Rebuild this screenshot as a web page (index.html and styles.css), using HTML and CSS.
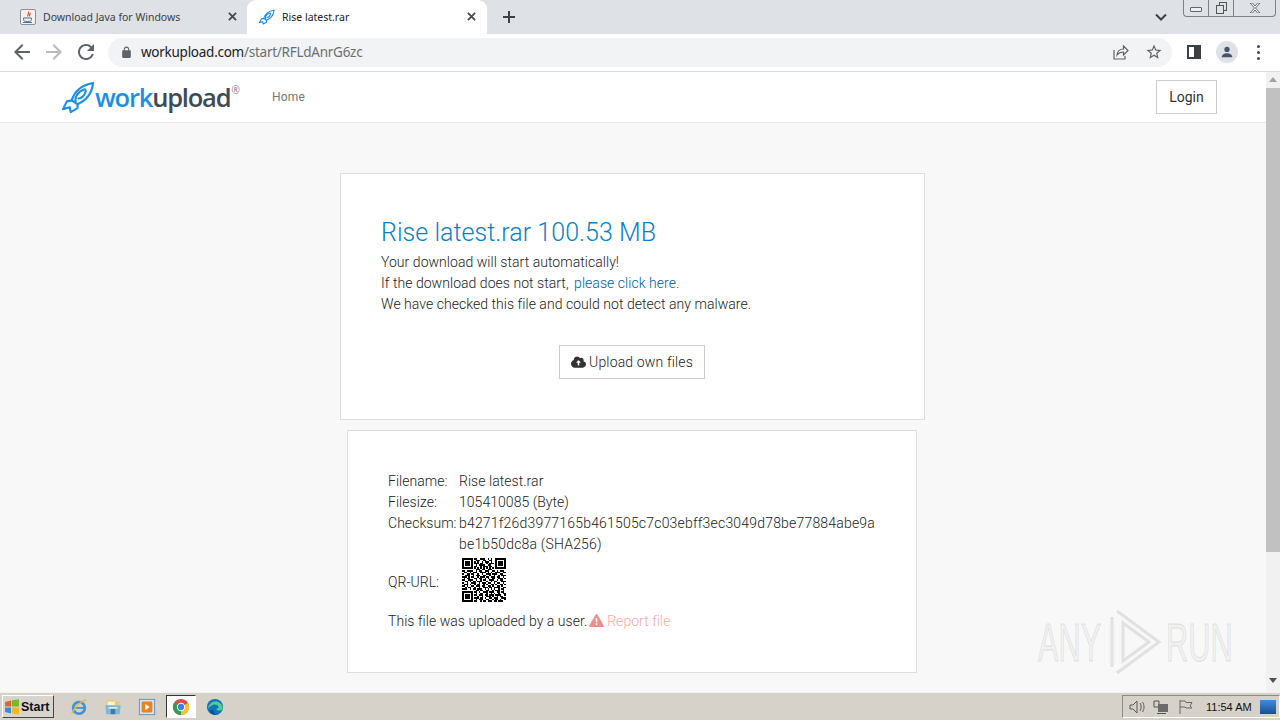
FILE: index.html

```html
<!DOCTYPE html>
<html lang="en">
<head>
  <meta charset="UTF-8">
  <title>Rise latest.rar</title>
  <link rel="stylesheet" href="styles.css">
</head>
<body>
  <!-- browser tabs -->
  <div class="tabstrip">
    <div class="tab">
      <svg class="favicon" viewBox="0 0 16 16"><rect x="0.5" y="0.5" width="15" height="15" rx="1.5" fill="#f4f1ec" stroke="#8b8f96"/><path d="M8.5 2.5c1.500 2-2 3-.5 5M10 4c.8 1.400-1.400 2-.3 3.400" fill="none" stroke="#d9531e" stroke-width="1.200"/><path d="M3.500 9h8v1.500c0 1.500-1.500 2-4 2s-4-.5-4-2zM3 13.500h9" fill="none" stroke="#4a6f9c" stroke-width="1"/></svg>
      <span class="tab-title">Download Java for Windows</span>
      <svg class="tab-close" viewBox="0 0 10 10"><path d="M1 1l8 8M9 1l-8 8"/></svg>
    </div>
    <div class="tab active">
      <svg class="favicon" viewBox="0 0 34 34"><path d="M10 20C13 10 21 4 32 2c-1 11-7 18-16 22zM10 20l-5 1-4 8 7-2 1 5 7-4 0-4M14 21c-1-5 3-10 8-12 2-1 3 1 2 3-1 3-4 6-7 6" fill="none" stroke="#1b8fe6" stroke-width="2.400" stroke-linejoin="round" stroke-linecap="round"/></svg>
      <span class="tab-title">Rise latest.rar</span>
      <svg class="tab-close" viewBox="0 0 10 10"><path d="M1 1l8 8M9 1l-8 8"/></svg>
    </div>
    <svg class="new-tab" viewBox="0 0 12 12"><path d="M6 0v12M0 6h12"/></svg>
    <svg class="tab-search" viewBox="0 0 12 8"><path d="M1 1.500l5 5 5-5"/></svg>
    <div class="win-controls">
      <div class="win-btn win-min"><span></span></div>
      <div class="win-btn win-max"><span></span><span></span></div>
      <div class="win-btn win-close">
        <svg viewBox="0 0 12 10"><path d="M1 0l4.500 5-4.500 5h2.500l2.500-3 2.500 3h2.500l-4.500-5 4.500-5h-2.500l-2.500 3-2.500-3z"/></svg>
      </div>
    </div>
  </div>

  <!-- browser toolbar -->
  <div class="toolbar">
    <svg class="tool-icon" viewBox="0 0 24 24"><path d="M20 11H7.830l5.590-5.590L12 4l-8 8 8 8 1.410-1.410L7.830 13H20v-2z"/></svg>
    <svg class="tool-icon faded" viewBox="0 0 24 24"><path d="M12 4l-1.410 1.410L16.170 11H4v2h12.170l-5.580 5.590L12 20l8-8z"/></svg>
    <svg class="tool-icon" viewBox="0 0 24 24"><path d="M17.650 6.350A7.958 7.958 0 0 0 12 4c-4.420 0-7.990 3.580-7.990 8s3.570 8 7.990 8c3.730 0 6.840-2.550 7.730-6h-2.080A5.990 5.990 0 0 1 12 18c-3.310 0-6-2.690-6-6s2.690-6 6-6c1.660 0 3.140.690 4.220 1.780L13 11h7V4l-2.350 2.350z"/></svg>
    <div class="omnibox">
      <svg class="lock" viewBox="0 0 24 24"><path d="M18 8h-1V6c0-2.760-2.240-5-5-5S7 3.240 7 6v2H6c-1.100 0-2 .9-2 2v10c0 1.100.9 2 2 2h12c1.100 0 2-.9 2-2V10c0-1.100-.9-2-2-2zM9 6c0-1.660 1.340-3 3-3s3 1.340 3 3v2H9V6z"/></svg>
      <span class="url"><span class="url-host">workupload.com</span>/start/RFLdAnrG6zc</span>
      <svg class="omni-icon share" viewBox="0 0 16 16"><path d="M1 6v9h11v-3M4 11c.5-4 3-6 6.500-6V2L15 6.500 10.500 11V8C8 8 5.500 9 4 11z"/></svg>
      <svg class="omni-icon star" viewBox="0 0 24 24"><path d="M22 9.240l-7.190-.62L12 2 9.190 8.630 2 9.240l5.460 4.730L5.820 21 12 17.270 18.180 21l-1.630-7.030L22 9.240zM12 15.400l-3.760 2.270 1-4.280-3.320-2.880 4.380-.38L12 6.100l1.710 4.040 4.380.38-3.320 2.880 1 4.280L12 15.400z"/></svg>
    </div>
    <div class="side-panel"><span></span></div>
    <div class="avatar">
      <svg viewBox="0 0 16 16"><circle cx="8" cy="5" r="3"/><path d="M2 14c0-3 3-4.500 6-4.500s6 1.500 6 4.500z"/></svg>
    </div>
    <div class="kebab"><span></span><span></span><span></span></div>
  </div>

  <!-- page -->
  <div class="viewport">
    <div class="page">
      <header class="site-header">
        <div class="logo">
          <svg class="logo-mark" viewBox="0 0 34 34"><path d="M10 20C13 10 21 4 32 2c-1 11-7 18-16 22zM10 20l-5 1-4 8 7-2 1 5 7-4 0-4M14 21c-1-5 3-10 8-12 2-1 3 1 2 3-1 3-4 6-7 6" fill="none" stroke="#1b8fe6" stroke-width="2.200" stroke-linejoin="round" stroke-linecap="round"/></svg>
          <span class="logo-text"><span class="logo-work">work</span>upload</span>
          <span class="logo-reg">®</span>
        </div>
        <a class="nav-link">Home</a>
        <a class="login-btn">Login</a>
      </header>

      <main class="content">
        <section class="card card-main">
          <h1 class="file-title">Rise latest.rar 100.53 MB</h1>
          <p class="line">Your download will start automatically!</p>
          <p class="line">If the download does not start, <a class="link">please click here.</a></p>
          <p class="line">We have checked this file and could not detect any malware.</p>
          <div class="upload-row">
            <a class="upload-btn">
              <svg class="cloud" viewBox="0 0 16 12"><path fill-rule="evenodd" d="M13.200 5.300C13.400 4.900 13.500 4.500 13.500 4c0-1.400-1.100-2.500-2.500-2.500-.5 0-1 .2-1.400.4C8.900.8 7.800 0 6.500 0 4.600 0 3 1.600 3 3.500v.3C1.300 4.400 0 6 0 7.800 0 10.100 1.800 12 4 12h8.500c1.900 0 3.500-1.600 3.500-3.500 0-1.500-1.200-2.900-2.800-3.200zM10 6.800H8.800v2.700c0 .2-.2.300-.3.300h-1c-.2 0-.3-.1-.3-.3V6.800H6c-.3 0-.5-.4-.2-.6l2-2c.1-.1.300-.1.400 0l2 2c.2.200.1.600-.2.600z"/></svg>
              Upload own files
            </a>
          </div>
        </section>

        <section class="card card-info">
          <div class="info-grid">
            <span>Filename:</span><span>Rise latest.rar</span>
            <span>Filesize:</span><span>105410085 (Byte)</span>
            <span>Checksum:</span><span class="hash">b4271f26d3977165b461505c7c03ebff3ec3049d78be77884abe9abe1b50dc8a (SHA256)</span>
            <span class="qr-label">QR-URL:</span>
            <span class="qr-cell">
              <svg class="qr" viewBox="0 0 29 29" shape-rendering="crispEdges">
                <path fill="none" stroke="#000" d="M0 .5h7M8 .5h2M12 .5h3M17 .5h1M19 .5h1M22 .5h7M0 1.500h1M6 1.500h1M9 1.500h3M14 1.500h2M18 1.500h2M22 1.500h1M28 1.500h1M0 2.500h1M2 2.500h3M6 2.500h1M8 2.500h1M10 2.500h1M13 2.500h1M15 2.500h3M19 2.500h1M22 2.500h1M24 2.500h3M28 2.500h1M0 3.500h1M2 3.500h3M6 3.500h1M8 3.500h3M12 3.500h2M16 3.500h1M18 3.500h3M22 3.500h1M24 3.500h3M28 3.500h1M0 4.500h1M2 4.500h3M6 4.500h1M9 4.500h1M11 4.500h4M17 4.500h2M22 4.500h1M24 4.500h3M28 4.500h1M0 5.500h1M6 5.500h1M8 5.500h2M12 5.500h1M14 5.500h3M18 5.500h2M22 5.500h1M28 5.500h1M0 6.500h7M8 6.500h1M10 6.500h1M12 6.500h1M14 6.500h1M16 6.500h1M18 6.500h1M20 6.500h1M22 6.500h7M9 7.500h3M13 7.500h2M17 7.500h3M0 8.500h2M3 8.500h4M9 8.500h1M11 8.500h2M15 8.500h3M20 8.500h2M23 8.500h1M25 8.500h3M1 9.500h2M5 9.500h1M7 9.500h3M12 9.500h4M17 9.500h1M19 9.500h1M22 9.500h3M27 9.500h2M0 10.500h1M3 10.500h2M6 10.500h2M10 10.500h1M13 10.500h1M16 10.500h3M20 10.500h3M25 10.500h2M2 11.500h3M7 11.500h1M9 11.500h3M14 11.500h2M18 11.500h1M21 11.500h1M24 11.500h1M26 11.500h3M0 12.500h3M4 12.500h1M6 12.500h2M10 12.500h1M12 12.500h3M16 12.500h2M19 12.500h3M23 12.500h2M27 12.500h1M1 13.500h1M3 13.500h2M8 13.500h2M11 13.500h2M15 13.500h1M17 13.500h1M20 13.500h2M24 13.500h3M28 13.500h1M0 14.500h2M4 14.500h3M9 14.500h1M12 14.500h1M14 14.500h2M18 14.500h3M23 14.500h1M25 14.500h2M2 15.500h2M5 15.500h1M7 15.500h2M10 15.500h3M16 15.500h1M19 15.500h1M21 15.500h2M26 15.500h3M0 16.500h1M3 16.500h1M6 16.500h3M11 16.500h1M13 16.500h3M17 16.500h2M21 16.500h1M23 16.500h2M27 16.500h1M1 17.500h3M5 17.500h1M8 17.500h1M10 17.500h2M14 17.500h1M16 17.500h1M19 17.500h2M22 17.500h1M25 17.500h2M28 17.500h1M0 18.500h2M3 18.500h1M6 18.500h2M9 18.500h3M13 18.500h2M17 18.500h2M20 18.500h1M23 18.500h2M26 18.500h1M2 19.500h1M4 19.500h2M8 19.500h1M11 19.500h1M14 19.500h3M18 19.500h2M21 19.500h4M27 19.500h2M0 20.500h3M5 20.500h1M7 20.500h2M10 20.500h3M15 20.500h1M17 20.500h1M19 20.500h1M21 20.500h1M24 20.500h1M26 20.500h2M9 21.500h2M12 21.500h2M16 21.500h2M20 21.500h1M22 21.500h3M27 21.500h1M0 22.500h7M8 22.500h2M11 22.500h1M14 22.500h3M18 22.500h3M23 22.500h2M26 22.500h2M0 23.500h1M6 23.500h1M9 23.500h1M12 23.500h2M16 23.500h1M19 23.500h1M21 23.500h1M24 23.500h1M27 23.500h2M0 24.500h1M2 24.500h3M6 24.500h1M8 24.500h2M11 24.500h3M15 24.500h2M18 24.500h3M22 24.500h4M28 24.500h1M0 25.500h1M2 25.500h3M6 25.500h1M10 25.500h1M13 25.500h1M16 25.500h3M20 25.500h1M23 25.500h1M25 25.500h2M0 26.500h1M2 26.500h3M6 26.500h1M8 26.500h3M12 26.500h2M15 26.500h1M18 26.500h2M21 26.500h3M26 26.500h3M0 27.500h1M6 27.500h1M9 27.500h1M11 27.500h3M16 27.500h2M20 27.500h1M22 27.500h2M25 27.500h1M28 27.500h1M0 28.500h7M8 28.500h2M12 28.500h1M14 28.500h2M17 28.500h3M21 28.500h2M24 28.500h3"/>
              </svg>
            </span>
          </div>
          <p class="line uploaded">This file was uploaded by a user.
            <a class="report">
              <svg class="warn" viewBox="0 0 16 14"><path fill-rule="evenodd" d="M8 0c.4 0 .7.2.9.6l6.900 11.800c.4.700-.1 1.600-.9 1.600H1.100c-.8 0-1.300-.9-.9-1.600L7.100.6C7.300.2 7.600 0 8 0zM7.100 4.500l.2 4.500h1.400l.2-4.500zM8 10c-.6 0-1 .4-1 1s.4 1 1 1 1-.4 1-1-.4-1-1-1z"/></svg>
              Report file
            </a>
          </p>
        </section>
      </main>
    </div>

    <div class="scrollbar">
      <span class="arrow-up"></span>
      <div class="thumb"></div>
      <span class="arrow-down"></span>
    </div>

    <!-- sandbox watermark -->
    <div class="watermark">
      <span>ANY</span>
      <svg viewBox="0 0 56 66"><path d="M5 8v50M10 2l42 31-42 31M16 14l26 19-26 19z" fill="none" stroke="#dcdcdc" stroke-width="3"/></svg>
      <span>RUN</span>
    </div>
  </div>

  <!-- windows taskbar -->
  <div class="taskbar">
    <div class="start-btn">
      <svg viewBox="0 0 16 16"><path d="M1 3l6-1.500V7.500H1z" fill="#e8632c"/><path d="M8 1.300l7-1V7.500H8z" fill="#7cb82f"/><path d="M1 8.500h6v6L1 13z" fill="#2f8fdc"/><path d="M8 8.500h7v7l-7-1z" fill="#f4b91f"/></svg>
      <span>Start</span>
    </div>
    <div class="quick">
      <svg viewBox="0 0 20 20"><circle cx="10" cy="11" r="6.500" fill="none" stroke="#3f93d6" stroke-width="3"/><path d="M4 11h12" stroke="#3f93d6" stroke-width="2"/><path d="M2 17C6 9 12 4 18 2" fill="none" stroke="#e8b93a" stroke-width="1.600"/></svg>
      <svg viewBox="0 0 20 20"><path d="M3 2h7l1 2h6v6H3z" fill="#eccb6f"/><path d="M4 4h8v4H4z" fill="#fbf3d2"/><path d="M1.500 8h17l-1 10h-15z" fill="#7fb8d8"/><rect x="7.500" y="12" width="5" height="6" fill="#3f7ca3"/><path d="M5 10h10v2H5z" fill="#d3e8f2"/></svg>
      <svg viewBox="0 0 20 20"><rect x="1.500" y="1.500" width="17" height="17" fill="#d6e3ef" stroke="#5d8fbd"/><rect x="4" y="4" width="12" height="12" rx="1.500" fill="#e9821f"/><path d="M8 6.500l5 3.500-5 3.500z" fill="#fff"/></svg>
      <div class="quick-active">
        <svg viewBox="0 0 20 20"><circle cx="10" cy="10" r="9" fill="#dd4b3e"/><path d="M10 10L2.200 5.500A9 9 0 0 0 10 19z" fill="#2f9e4f"/><path d="M10 10l7.800-4.500A9 9 0 0 1 10 19z" fill="#f6c12d"/><circle cx="10" cy="10" r="4.600" fill="#fff"/><circle cx="10" cy="10" r="3.500" fill="#3b7fe3"/></svg>
      </div>
      <svg viewBox="0 0 20 20"><circle cx="10" cy="10" r="9" fill="#1273bd"/><path d="M2 12c1-6 6-9 10-8 4 1 6.500 4 6.500 7 0 2-2 3-4 3s-3-1-3-2c2 0 3-1 2-3-1-2-5-3-8 0-1.500 1-2.500 2-3.500 3z" fill="#4fd08c"/><path d="M4 14c1 4 6 6 10 4.500-4 0-6-2-6-5-1.500-.5-3 0-4 .5z" fill="#0c4f8f"/></svg>
    </div>
    <div class="tray">
      <svg viewBox="0 0 16 16"><path d="M1 6h3l4-4v12l-4-4H1z" fill="none" stroke="#5a5a5a"/><path d="M11 4c1.500 2 1.500 6 0 8M13.500 3c2 3 2 7 0 10" fill="none" stroke="#5a5a5a"/></svg>
      <svg viewBox="0 0 16 16"><path d="M1 2h5v6H1z" fill="none" stroke="#555"/><rect x="5" y="5" width="10" height="8" fill="#6b6b6b"/><path d="M4 14.500h9" stroke="#555"/></svg>
      <svg viewBox="0 0 16 16"><path d="M3 1v14M3 2h5l1 1.500h6L13 7l2 2H9L8 8H3" fill="none" stroke="#666"/></svg>
      <span class="clock">11:54 AM</span>
      <div class="show-desktop"></div>
    </div>
  </div>
</body>
</html>
```

FILE: styles.css

```css
* { box-sizing: border-box; }
html, body { margin: 0; height: 100%; }
body {
  width: 1280px; height: 720px; overflow: hidden;
  display: flex; flex-direction: column;
  font-family: Roboto, "Liberation Sans", sans-serif;
  font-weight: 300; font-size: 14px; color: #222;
}
svg { display: block; flex: none; }

/* tabs */
.tabstrip { height: 34px; background: #dee1e6; display: flex; position: relative; padding-left: 8px; flex: none; }
.tab { width: 239px; display: flex; align-items: center; padding: 0 10px 1px 12px; font: 10.500px "Noto Sans", sans-serif; color: #3c4043; }
.tab.active { width: 240px; padding-right: 11px; background: #fff; border-radius: 9px 9px 0 0; color: #202124; }
.favicon { width: 16px; height: 16px; margin-right: 7px; }
.tab-title { flex: 1; white-space: nowrap; }
.tab-close { width: 9px; height: 9px; fill: none; stroke: #45484c; stroke-width: 2; }
.new-tab { width: 12px; height: 12px; margin: 11px 0 0 16px; fill: none; stroke: #3c4043; stroke-width: 2; }
.tab-search { position: absolute; left: 1155px; top: 13px; width: 12px; height: 8px; fill: none; stroke: #3c4043; stroke-width: 2; }
.win-controls { position: absolute; left: 1183px; top: 0; width: 93px; height: 17px; display: flex; border: 1px solid #7d8087; border-top: 0; border-radius: 0 0 4px 4px; }
.win-btn { position: relative; border-right: 1px solid #7d8087; display: flex; align-items: center; justify-content: center; }
.win-min { width: 25px; }
.win-min span { width: 12px; height: 5px; border: 1px solid #666; border-radius: 1px; margin-top: 3px; background: #eceef1; }
.win-max { width: 25px; }
.win-max span { position: absolute; width: 8px; height: 9px; border: 1px solid #555; left: 7px; top: 5px; background: #dee1e6; }
.win-max span:first-child { left: 10px; top: 2px; }
.win-close { flex: 1; border-right: 0; }
.win-close svg { width: 12px; height: 10px; fill: #eef0f3; stroke: #666; stroke-width: .9; }

/* toolbar */
.toolbar { height: 38px; background: #fff; border-bottom: 1px solid #dadce0; display: flex; align-items: center; padding: 0 0 1px 10px; flex: none; }
.tool-icon { width: 24px; height: 24px; margin-right: 8px; fill: #5f6368; }
.tool-icon.faded { fill: #b6b9bd; }
.omnibox { width: 1064px; height: 29px; margin-left: 2px; background: #f1f3f4; border-radius: 15px; display: flex; align-items: center; padding-left: 12px; }
.lock { width: 13px; height: 13px; fill: #5f6368; }
.url { flex: 1; margin-left: 8px; font: 13.500px "Noto Sans", sans-serif; color: #6b6f74; letter-spacing: -.26px; }
.url-host { color: #202124; }
.omni-icon { width: 18px; height: 18px; fill: #5f6368; }
.share { width: 16px; height: 16px; margin-right: 16px; fill: none; stroke: #5f6368; stroke-width: 1.200; }
.star { margin-right: 9px; }
.side-panel { width: 14px; height: 14px; margin-left: 15px; border: 2px solid #3c4043; background: #fff; }
.side-panel span { display: block; width: 5px; height: 10px; margin-left: 5px; background: #3c4043; }
.avatar { width: 22px; height: 22px; margin-left: 15px; border-radius: 50%; background: #dfe1e5; display: flex; align-items: center; justify-content: center; overflow: hidden; }
.avatar svg { width: 14px; height: 14px; fill: #44546f; }
.kebab { margin-left: 19px; display: flex; flex-direction: column; gap: 3px; }
.kebab span { width: 3px; height: 3px; border-radius: 50%; background: #45484c; }

/* page */
.viewport { flex: 1; display: flex; position: relative; min-height: 0; }
.page { width: 1266px; background: #f8f8f8; }
.site-header { height: 51px; background: #fff; border-bottom: 1px solid #e7e7e7; display: flex; align-items: center; padding: 0 49px 0 62px; }
.logo { display: flex; align-items: center; width: 210px; }
.logo-mark { width: 33px; height: 33px; margin-top: 1px; }
.logo-text { font: 600 25.500px "Open Sans", sans-serif; letter-spacing: -1.200px; color: #3d4a57; }
.logo-work { color: #1b8fe6; }
.logo-reg { font: 10px "Open Sans", sans-serif; color: #777; margin: -14px 0 0 1px; }
.nav-link { font-size: 12px; font-weight: 400; color: #777; letter-spacing: .2px; }
.login-btn { margin-left: auto; width: 61px; height: 34px; border: 1px solid #ccc; background: #fff; display: flex; align-items: center; justify-content: center; font-size: 14px; font-weight: 400; color: #333; }

.content { display: flex; flex-direction: column; align-items: center; padding: 50px 1px 0 0; letter-spacing: .04px; }
.card { background: #fff; border: 1px solid #ddd; padding: 40px; }
.card-main { width: 585px; height: 247px; }
.card-info { width: 570px; height: 243px; margin: 10px 1px 0 0; }
.file-title { margin: 0 0 4px; padding-top: 4px; font-size: 25px; font-weight: 300; line-height: 30px; color: #0a7fc9; }
.line { margin: 0; line-height: 21px; }
.link { color: #00609f; margin-left: 2px; }
.upload-row { display: flex; justify-content: center; margin: 30px 1px 0 0; }
.upload-btn { width: 146px; height: 34px; border: 1px solid #ccc; display: flex; align-items: center; justify-content: center; gap: 3px; color: #222; letter-spacing: .15px; }
.cloud { width: 15px; height: 12px; fill: #333; }

.info-grid { display: grid; grid-template-columns: 71px 1fr; line-height: 21px; margin-top: 0; }
.hash { word-break: break-all; letter-spacing: .19px; }
.qr-label { align-self: center; margin-top: 8px; }
.qr-cell { padding: 3px 0 0 3px; }
.qr { width: 44px; height: 44px; }
.uploaded { margin-top: 9px; }
.report { color: #f4a9a8; margin-left: -2px; }
.warn { display: inline-block; width: 15px; height: 13px; fill: #ee8f8d; vertical-align: -1px; }

.scrollbar { width: 14px; background: #f1f1f1; display: flex; flex-direction: column; align-items: center; }
.arrow-up { margin-top: 5px; border: 4px solid transparent; border-top: 0; border-bottom: 5px solid #a3a3a3; }
.thumb { width: 14px; height: 464px; margin-top: 6px; background: #c1c1c1; }
.arrow-down { margin-top: 126px; border: 4px solid transparent; border-bottom: 0; border-top: 5px solid #505050; }

.watermark { position: absolute; left: 1038px; top: 537px; display: flex; align-items: center; gap: 3px; font: 400 53px "Liberation Sans", sans-serif; color: rgba(235, 235, 235, .5); -webkit-text-stroke: 1px rgba(190, 190, 190, .4); pointer-events: none; }
.watermark span { display: inline-block; width: 66px; transform: scaleX(.58); transform-origin: left center; white-space: nowrap; }
.watermark svg { width: 56px; height: 66px; opacity: .8; }

/* taskbar */
.taskbar { height: 28px; background: #d6d2ca; border-top: 1px solid #f3f1ec; display: flex; align-items: center; position: relative; flex: none; }
.start-btn { width: 52px; height: 23px; margin-left: 2px; background: #d9d5ce; border: 1px solid #fff; border-right-color: #444; border-bottom-color: #444; display: flex; align-items: center; padding-left: 1px; font: 700 12.500px "Liberation Sans", sans-serif; color: #111; }
.start-btn svg { width: 16px; height: 16px; margin-right: 1px; }
.quick { display: flex; align-items: center; margin-left: 16px; }
.quick svg { width: 18px; height: 18px; margin-right: 16px; }
.quick-active { width: 30px; height: 23px; margin: 0 10px 0 -6px; background: #fff; border: 1px solid #fff; border-top-color: #333; border-left-color: #333; display: flex; align-items: center; justify-content: center; }
.quick-active svg { margin: 0; }
.tray { margin-left: auto; width: 158px; height: 23px; border: 1px solid #fff; border-top-color: #8a8a86; border-left-color: #8a8a86; display: flex; align-items: center; padding-left: 6px; gap: 8px; font: 11px "Liberation Sans", sans-serif; color: #111; }
.tray svg { width: 16px; height: 16px; }
.clock { margin-left: 5px; white-space: nowrap; }
.show-desktop { width: 16px; height: 14px; margin-left: auto; margin-right: 3px; background: linear-gradient(#3c8edc, #1a4f96); }
```
